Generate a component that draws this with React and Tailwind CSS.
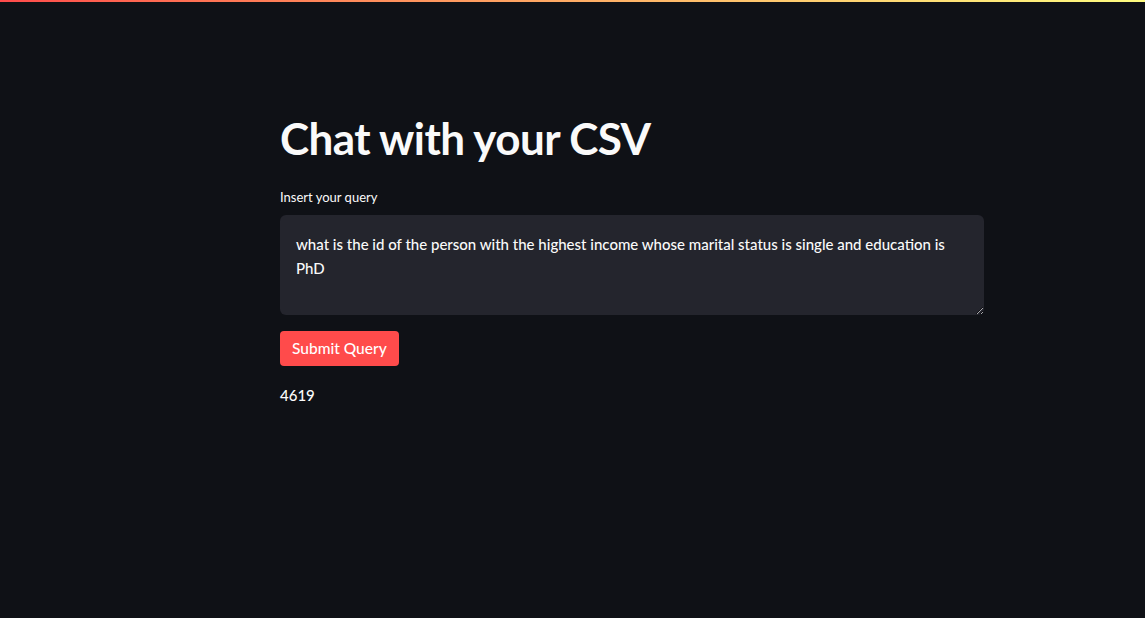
export default function App() {
  return (
    <div className="min-h-[618px] w-full bg-[#0f1116] text-[#fafafa]" style={{ fontFamily: 'Lato, "Noto Sans", sans-serif' }}>
      {/* top decoration */}
      <div className="h-[2px] w-full bg-gradient-to-r from-[#ff4b4b] to-[#fffd80]" />

      <div className="ml-[280px] w-[704px] pt-[110px]">
        <h1 className="text-[44px] font-bold leading-[1.2] tracking-[-0.6px]">Chat with your CSV</h1>

        <div className="mt-[22px]">
          <label className="block text-[13px] leading-[20px] mb-[8px]">Insert your query</label>
          <textarea
            className="block h-[100px] w-full resize-y rounded-[6px] bg-[#24252d] px-[16px] py-[17px] text-[15px] font-medium leading-[24px] text-[#fafafa] outline-none"
            defaultValue="what is the id of the person with the highest income whose marital status is single and education is PhD"
          />
        </div>

        <button className="mt-[16px] h-[35px] rounded-[4px] bg-[#ff4b4b] px-[12px] text-[15.5px] font-medium text-white">
          Submit Query
        </button>

        <p className="mt-[17px] text-[15px] font-medium leading-[24px]">4619</p>
      </div>
    </div>
  );
}
